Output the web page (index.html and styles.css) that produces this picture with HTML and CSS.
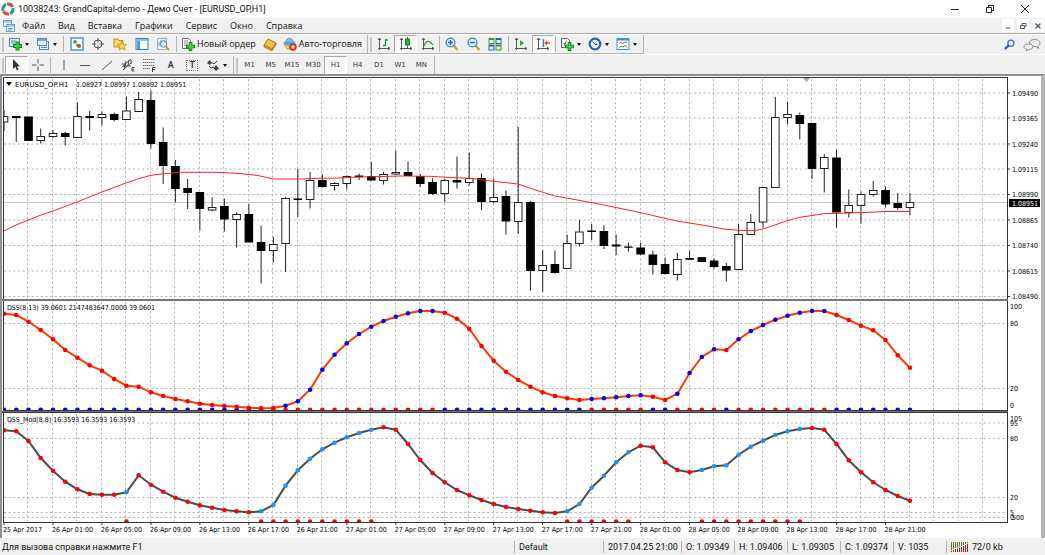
FILE: index.html
```html
<!DOCTYPE html>
<html lang="ru">
<head>
<meta charset="utf-8">
<title>10038243: GrandCapital-demo</title>
<link rel="stylesheet" href="styles.css">
</head>
<body>
<div class="window">
  <header class="titlebar">
    <svg class="logo" viewBox="0 0 14 14"><g fill="none" stroke-width="3"><path d="M2.2 9A5 5 0 0 1 5 2.400" stroke="#2f9c86"/><path d="M6 2.100A5 5 0 0 1 11.600 5" stroke="#d8453c"/><path d="M11.900 6A5 5 0 0 1 9 11.600" stroke="#2f9c86"/><path d="M8 11.900A5 5 0 0 1 2.600 9.500" stroke="#d8453c"/></g></svg>
    <h1 class="title">10038243: GrandCapital-demo - Демо Счет - [EURUSD_OP,H1]</h1>
    <div class="controls">
      <button class="ctl" aria-label="Свернуть"><svg viewBox="0 0 10 10"><path d="M1 5.500h8" stroke="#222"/></svg></button>
      <button class="ctl" aria-label="Развернуть"><svg viewBox="0 0 10 10" fill="none" stroke="#222"><path d="M1.500 3.500h5v5h-5zM3.500 3V1.500h5v5H7"/></svg></button>
      <button class="ctl" aria-label="Закрыть"><svg viewBox="0 0 10 10"><path d="M1 1l8 8M9 1l-8 8" stroke="#222"/></svg></button>
    </div>
  </header>

  <nav class="menubar">
    <svg class="menuicon" viewBox="0 0 14 14" fill="#eef6ff" stroke="#6a9fd8"><rect x="1.500" y="1.500" width="8" height="6"/><path d="M1.500 3h8"/><rect x="4.500" y="5.500" width="8" height="7"/><path d="M4.500 7h8M6 9.500h5M6 11h4"/></svg>
    <button class="menu">Файл</button>
    <button class="menu">Вид</button>
    <button class="menu">Вставка</button>
    <button class="menu">Графики</button>
    <button class="menu">Сервис</button>
    <button class="menu">Окно</button>
    <button class="menu">Справка</button>
    <div class="mdi">
      <button class="mdibtn" aria-label="Свернуть график"><svg viewBox="0 0 8 8"><path d="M2 6h4" stroke="#4a6078" stroke-width="1.300"/></svg></button>
      <button class="mdibtn" aria-label="Восстановить график"><svg viewBox="0 0 8 8" fill="none" stroke="#4a6078"><path d="M1.500 3.500h4v3h-4zM3 3V1.500h4v3H6"/></svg></button>
      <button class="mdibtn" aria-label="Закрыть график"><svg viewBox="0 0 8 8"><path d="M1.500 1.500l5 5M6.500 1.500l-5 5" stroke="#4a6078" stroke-width="1.500"/></svg></button>
    </div>
  </nav>

  <div class="toolrow">
    <div class="toolbar">
      <span class="grip"></span>
      <button class="drop" aria-label="Новый график"><svg class="ic" viewBox="0 0 14 14"><rect x="1.500" y="1.500" width="10" height="8" fill="#e4f0fb" stroke="#4d8cc0"/><path d="M3 4h5M3 6h4" stroke="#4d8cc0"/><path d="M9.500 4.500v9M5 9h9" stroke="#12831a" stroke-width="4"/><path d="M9.500 5.500v7M6 9h7" stroke="#3fd23f" stroke-width="2"/></svg><i class="caret"></i></button>
      <button class="drop" aria-label="Профили"><svg class="ic" viewBox="0 0 14 14" fill="#eaf4fd" stroke="#4d8cc0"><rect x="3.500" y="4.500" width="9" height="8"/><path d="M5 10.500h6"/><rect x="1.500" y="1.500" width="9" height="7"/><path d="M1.500 3h9" stroke-width="1.500"/></svg><i class="caret"></i></button>
      <span class="sep"></span>
      <div class="group g5">
        <button class="tool" aria-label="Обзор рынка"><svg class="ic" viewBox="0 0 14 14"><rect x="1" y="1" width="12" height="12" fill="#fff" stroke="#4a96cf" stroke-width="1.500"/><circle cx="5" cy="5" r="1.800" fill="#26a836"/><path d="M4 3l2 0 0 2zM9.500 6.500l2 3h-4z" fill="#e8452c"/><circle cx="9" cy="9" r="2" fill="#e8452c"/><circle cx="7.300" cy="8.300" r="1.300" fill="#26a836"/></svg></button>
        <button class="tool" aria-label="Окно данных"><svg class="ic" viewBox="0 0 14 14" fill="none" stroke="#555"><circle cx="7" cy="7" r="4"/><path d="M7 1v4.500M7 8.500V13M1 7h4.500M8.500 7H13"/></svg></button>
        <button class="tool" aria-label="Навигатор"><svg class="ic" viewBox="0 0 14 14"><path d="M1 2h4l1 1.500h4V10H1z" fill="#fbd76a" stroke="#bd8a1a"/><path d="M9 4.500l1.400 3 3.100.3-2.300 2.100.7 3.100L9 11.400 6.100 13l.7-3.100-2.300-2.100 3.100-.3z" fill="#ffd84a" stroke="#b9841b" stroke-width=".8"/></svg></button>
        <button class="tool" aria-label="Терминал"><svg class="ic" viewBox="0 0 14 14"><rect x="1" y="1.500" width="12" height="11" fill="#fff" stroke="#2f7fc0"/><path d="M1.500 3h11" stroke="#2f7fc0"/><rect x="2" y="4" width="3" height="8" fill="#4aa0de"/></svg></button>
        <button class="tool" aria-label="Тестер стратегий"><svg class="ic" viewBox="0 0 14 14"><path d="M1.500 1.500h9v11h-9z" fill="#f2f6fa" stroke="#9ab"/><path d="M3 9V5M5 8V3M8 4V3" stroke="#69a"/><circle cx="7.500" cy="7" r="3.200" fill="#cfe6fa" fill-opacity=".8" stroke="#4a8cc8"/><path d="M10 9.500l3 3.500" stroke="#c89a2c" stroke-width="2"/></svg></button>
      </div>
      <span class="sep"></span>
      <button class="wide"><svg class="ic" viewBox="0 0 14 14"><path d="M1.500 1.500h6l2 2v8h-8z" fill="#fff" stroke="#667"/><path d="M3 4h4M3 6h4M3 8h3" stroke="#888"/><path d="M9.500 5v9M5 9.500h9" stroke="#12831a" stroke-width="3.600"/><path d="M9.500 6v7M6 9.500h7" stroke="#3fd23f" stroke-width="1.800"/></svg>Новый ордер</button>
      <button class="tool editor" aria-label="MetaEditor"><svg class="ic" viewBox="0 0 14 14"><path d="M1 8l4-6 8 4-4 6z" fill="#f3c04a" stroke="#a9741a"/><path d="M1 8v2l8 4 4-6V6L9 12z" fill="#d99a28" stroke="#a9741a" stroke-width=".7"/></svg></button>
      <button class="wide"><svg class="ic" viewBox="0 0 14 14"><path d="M1 7c2 2 9 2 12 0l-2 5H4z" fill="#f5d257" stroke="#b48a20" stroke-width=".7"/><ellipse cx="6.500" cy="6" rx="6" ry="2.400" fill="#5ea7de"/><path d="M3 5c0-5 7-5 7 0" fill="#7dbcec" stroke="#3c84bd" stroke-width=".7"/><circle cx="10" cy="10" r="3.700" fill="#e02a1c"/><rect x="8.500" y="8.500" width="3" height="3" fill="#fff"/></svg>Авто-торговля</button>
      <span class="edge"></span>
      <span class="grip"></span>
      <div class="group g3">
        <button class="tool" aria-label="Бары"><svg class="ic" viewBox="0 0 14 14" fill="none" stroke="#555"><path d="M2.500 1v12M1 11.500h12M1 3l1.500-2L4 3M11 10l2 1.500L11 13"/><path d="M8.500 2v7M8.500 3H11M6 8.500h2.500" stroke="#26963a" stroke-width="1.300"/></svg></button>
        <button class="tool pressed" aria-label="Японские свечи"><svg class="ic" viewBox="0 0 14 14" fill="none" stroke="#555"><path d="M2.500 1v12M1 11.500h12M1 3l1.500-2L4 3M11 10l2 1.500L11 13"/><path d="M8.500 0v11" stroke="#138a1e"/><rect x="6.500" y="2" width="4" height="6" fill="#25b934" stroke="#138a1e"/></svg></button>
        <button class="tool" aria-label="Линия"><svg class="ic" viewBox="0 0 14 14" fill="none" stroke="#555"><path d="M2.500 1v12M1 11.500h12M1 3l1.500-2L4 3M11 10l2 1.500L11 13"/><path d="M3 9c2-6 5-6 9-1" stroke="#26963a" stroke-width="1.200"/></svg></button>
      </div>
      <span class="sep near"></span>
      <div class="group g3">
        <button class="tool" aria-label="Увеличить"><svg class="ic" viewBox="0 0 14 14"><path d="M8.500 8.500l4 4.500" stroke="#d3a52e" stroke-width="2.600"/><circle cx="5.500" cy="5.500" r="4.400" fill="#d9efff" stroke="#3b86c8" stroke-width="1.300"/><path d="M3 5.500h5M5.500 3v5" stroke="#2767a5" stroke-width="1.400"/></svg></button>
        <button class="tool" aria-label="Уменьшить"><svg class="ic" viewBox="0 0 14 14"><path d="M8.500 8.500l4 4.500" stroke="#d3a52e" stroke-width="2.600"/><circle cx="5.500" cy="5.500" r="4.400" fill="#d9efff" stroke="#3b86c8" stroke-width="1.300"/><path d="M3 5.500h5" stroke="#2767a5" stroke-width="1.400"/></svg></button>
        <button class="tool" aria-label="Расположить окна"><svg class="ic" viewBox="0 0 14 14"><path d="M.5 1h6v6h-6zM7.500 7.500h6v6h-6z" fill="#3e9a22"/><path d="M7.500 1h6v6h-6zM.5 7.500h6v6h-6z" fill="#2860b8"/><path d="M1.500 3h4v3h-4zM8.500 3h4v3h-4zM1.500 9.500h4v3h-4zM8.500 9.500h4v3h-4z" fill="#e9f3e4"/></svg></button>
      </div>
      <span class="sep"></span>
      <div class="group g2">
        <button class="tool" aria-label="Автопрокрутка"><svg class="ic" viewBox="0 0 14 14" fill="none" stroke="#555"><path d="M2.500 1v12M1 11.500h12M1 3l1.500-2L4 3M11 10l2 1.500L11 13"/><path d="M6 3v6l4-3z" fill="#22b030" stroke="none"/></svg></button>
        <button class="tool pressed" aria-label="Сдвиг графика"><svg class="ic" viewBox="0 0 14 14" fill="none" stroke="#555"><path d="M2.500 1v12M1 11.500h12M1 3l1.500-2L4 3M11 10l2 1.500L11 13"/><path d="M7.500 2v8" stroke="#3c76ad" stroke-width="1.400"/><path d="M9 6h5" stroke="#d2491d" stroke-width="1.400"/><path d="M8.500 6L11 3.500v5z" fill="#d2491d" stroke="none"/></svg></button>
      </div>
      <span class="sep near"></span>
      <button class="drop" aria-label="Индикаторы"><svg class="ic" viewBox="0 0 14 14"><path d="M1.500 1.500h6l2 2v7h-8z" fill="#fff" stroke="#667"/><path d="M4 9c1 0 1-5 3-5M3.500 6.500H6" stroke="#667" fill="none"/><path d="M9.500 5v9M5 9.500h9" stroke="#12831a" stroke-width="3.600"/><path d="M9.500 6v7M6 9.500h7" stroke="#3fd23f" stroke-width="1.800"/></svg><i class="caret"></i></button>
      <button class="drop" aria-label="Периоды"><svg class="ic" viewBox="0 0 14 14"><circle cx="7" cy="7" r="5.300" fill="#f4faff" stroke="#1f66b8" stroke-width="2.200"/><path d="M4.500 4.500L7 7.300h2.500" stroke="#333" fill="none"/></svg><i class="caret"></i></button>
      <button class="drop" aria-label="Шаблоны"><svg class="ic" viewBox="0 0 14 14"><rect x="1" y="1.500" width="12" height="11" fill="#fff" stroke="#4a8fc6"/><path d="M1 2.500h12" stroke="#4a8fc6" stroke-width="2"/><path d="M3 6.500l2-1 2 1 2-1.500 2 .5" stroke="#c8502e" fill="none"/><path d="M3 10.500l2-1.500 2 1 2-1.500 2 1.500" stroke="#2f9a40" fill="none"/></svg><i class="caret"></i></button>
      <span class="edge"></span>
    </div>
    <div class="right">
      <button class="tool fixed" aria-label="Поиск"><svg class="ic small" viewBox="0 0 12 12"><circle cx="7.500" cy="4.500" r="3.300" fill="#e4f0ff" stroke="#3a6fdc" stroke-width="1.500"/><path d="M5 7l-4 4" stroke="#2450c0" stroke-width="2.400"/></svg></button>
      <button class="tool fixed" aria-label="Сообщения"><svg class="ic chat" viewBox="0 0 18 14" fill="#f0f0f0" stroke="#888"><path d="M11.500 1.500c3.500 0 5.500 1.500 5.500 3.500 0 1.500-1 2.500-2 3l.5 2.500L13 8.500C9 8.800 6.500 7.500 6.500 5s2-3.500 5-3.500z"/><path d="M5.500 6c3 0 4.500 1.200 4.500 2.800S8 11.500 5.500 11.500L3.500 13v-2C2 10.500 1 10 1 8.800 1 7.200 2.500 6 5.500 6z"/></svg></button>
    </div>
  </div>

  <div class="toolrow second">
    <div class="toolbar">
      <span class="grip"></span>
      <div class="group g2">
        <button class="tool pressed" aria-label="Курсор"><svg class="ic" viewBox="0 0 14 14"><path d="M4 1v10l2.400-2.200L8 12.500l1.600-.7L8 8.300h3z" fill="#333"/></svg></button>
        <button class="tool" aria-label="Перекрестие"><svg class="ic" viewBox="0 0 14 14"><path d="M7 1v4.500M7 8.500V13M1 7h4.500M8.500 7H13" stroke="#555"/></svg></button>
      </div>
      <span class="sep"></span>
      <div class="group g7">
        <button class="tool" aria-label="Вертикальная линия"><svg class="ic" viewBox="0 0 14 14"><path d="M7 2v10" stroke="#555"/></svg></button>
        <button class="tool" aria-label="Горизонтальная линия"><svg class="ic" viewBox="0 0 14 14"><path d="M2 7.500h10" stroke="#555"/></svg></button>
        <button class="tool" aria-label="Трендовая линия"><svg class="ic" viewBox="0 0 14 14"><path d="M2 12L12 3" stroke="#555"/></svg></button>
        <button class="tool" aria-label="Канал"><svg class="ic" viewBox="0 0 14 14" fill="none" stroke="#555"><path d="M1 9l9-8M2 12l9-8M1 6h3l-1 6M5 3l-1 7M8 2l-1 6M10 2v4M2 8h8" /><path d="M13.500 9.500h-2.500v3.500h2.500M11 11.200h2"/></svg></button>
        <button class="tool" aria-label="Фибоначчи"><svg class="ic" viewBox="0 0 14 14" fill="none" stroke="#777"><path d="M1 1.500h12M1 4.500h12M1 7.500h12M1 10.500h7" stroke-dasharray="1.500 .5"/><path d="M10.500 14V9.500h3M10.500 11.500H13" stroke="#444"/></svg></button>
        <button class="tool letter">A</button>
        <button class="tool letter"><span class="boxed">T</span></button>
      </div>
      <button class="drop" aria-label="Стрелки"><svg class="ic" viewBox="0 0 14 14" fill="#444"><path d="M3.500 2L6 5 3.500 7 1 5zM10 7l3 3.500L10 13l-2.500-2.500z"/><path d="M6 4.500l2 1.500 3-3M3 8l2 2 3-1" fill="none" stroke="#444"/></svg><i class="caret"></i></button>
      <span class="edge"></span>
      <span class="grip"></span>
      <div class="group g9">
        <button class="tool tf">M1</button>
        <button class="tool tf">M5</button>
        <button class="tool tf">M15</button>
        <button class="tool tf">M30</button>
        <button class="tool tf pressed">H1</button>
        <button class="tool tf">H4</button>
        <button class="tool tf">D1</button>
        <button class="tool tf">W1</button>
        <button class="tool tf">MN</button>
      </div>
      <span class="edge"></span>
    </div>
  </div>

  <main class="charts">
    <svg class="panel" id="price" viewBox="2 76 1039 225"></svg>
    <svg class="panel" id="dss" viewBox="2 301 1039 111"></svg>
    <svg class="panel" id="mod" viewBox="2 412 1039 126"></svg>
  </main>

  <footer class="status">
    <span class="hint">Для вызова справки нажмите F1</span>
    <span class="cell profile">Default</span>
    <span class="cell date">2017.04.25 21:00</span>
    <span class="cell">O: 1.09349</span>
    <span class="cell">H: 1.09406</span>
    <span class="cell">L: 1.09305</span>
    <span class="cell">C: 1.09374</span>
    <span class="cell">V: 1035</span>
    <span class="cell traffic"><svg class="bars" viewBox="0 0 18 10"><path d="M.5 0v8M2.500 0v7M4.500 0v6M6.500 0v5.500M8.500 0v4.500M10.500 0v4M12.500 0v3M14.500 0v2M16.500 0v1" stroke="#4f7d1f"/><path d="M.5 9v1M2.500 8v2M4.500 7v3M6.500 6.500V10M8.500 5.500V10M10.500 5v5M12.500 4v6M14.500 3v7M16.500 2v8" stroke="#a01f18"/></svg>72/0 kb</span>
  </footer>
</div>
<script src="chart.js"></script>
</body>
</html>
```
FILE: styles.css
```css
* { box-sizing: border-box; }
body {
  margin: 0;
  background: #f0f0f0;
  color: #111;
  font: 9px/12px Roboto, "Open Sans", sans-serif;
}
button {
  margin: 0;
  padding: 0;
  border: 0;
  background: none;
  color: inherit;
  font: inherit;
}
.window { display: flex; flex-direction: column; min-height: 100vh; }

.titlebar {
  display: flex;
  align-items: center;
  height: 18px;
  padding-left: 1px;
  background: #fff;
}
.logo { width: 14px; height: 14px; }
.title { margin: 0 0 0 3px; font-size: 9px; font-weight: 400; white-space: nowrap; }
.controls { display: flex; margin-left: auto; padding-right: 3px; }
.ctl { display: flex; justify-content: center; width: 35px; }
.ctl svg { width: 10px; height: 10px; }

.menubar {
  display: flex;
  align-items: center;
  height: 16px;
  padding-left: 2px;
  border-bottom: 1px solid #a8a8a8;
}
.menuicon { width: 14px; height: 14px; margin-right: 6px; }
.menu { margin-right: 13px; font-family: "Open Sans", "Noto Sans", sans-serif; white-space: nowrap; }
.mdi { display: flex; gap: 3px; margin-left: auto; padding-right: 1px; }
.mdibtn {
  display: flex;
  align-items: center;
  justify-content: center;
  width: 12px;
  height: 13px;
  background: #fff;
}
.mdibtn svg { width: 8px; height: 8px; }

.toolrow { display: flex; justify-content: space-between; height: 20px; border-top: 1px solid #fff; }
.toolbar { display: flex; align-items: center; border-bottom: 1px solid #b4b4b4; }
.second .toolbar { padding-top: 1px; border-bottom: 0; }
.right { display: flex; align-items: center; gap: 3px; padding-right: 3px; }
.grip { width: 2px; height: 15px; margin: 0 1px 0 2px; background: #c4c4c4; }
.sep { width: 1px; height: 16px; margin: 0 2px; background: #b4b4b4; }
.sep.near { margin: 0 1px; }
.edge { width: 1px; height: 18px; margin-left: 2px; background: #b4b4b4; }
.group { display: flex; height: 18px; }
.g2 { width: 43px; }
.g3 { width: 65px; }
.g5 { width: 108px; }
.g7 { width: 150px; }
.g9 { width: 193px; }
.tool { display: flex; flex: 1; align-items: center; justify-content: center; }
.tool.fixed { flex: none; width: 20px; }
.tool.editor { flex: none; width: 22px; }
.pressed { background: #f8f8f8; border: 1px solid; border-color: #a8a8a8 #fff #fff #a8a8a8; }
.drop { display: flex; align-items: center; width: 28px; padding-left: 3px; gap: 3px; }
.ic { flex: none; width: 14px; height: 14px; }
.ic.small { width: 11px; height: 11px; }
.ic.chat { width: 18px; }
.caret { border: 2px solid transparent; border-top: 3px solid #111; border-bottom: 0; }
.wide {
  display: flex;
  align-items: center;
  gap: 2px;
  padding: 0 3px 0 2px;
  font-family: "Open Sans", "Noto Sans", sans-serif;
  font-weight: 500;
  white-space: nowrap;
}
.letter { color: #444; font-weight: 700; }
.boxed { padding: 0 2px; border: 1px dotted #777; line-height: 9px; }
.tf { color: #333; font: 7px/9px "DejaVu Sans", sans-serif; }

.charts {
  border: solid #8e8e8e;
  border-width: 2px 4px 0 2px;
  border-right-color: #b4b4b4;
  background: #fff;
}
.panel { display: block; width: 100%; height: auto; }
.panel text { font: 7px "DejaVu Sans Condensed", "DejaVu Sans", sans-serif; fill: #000; }
.panel .symbol { font-family: "DejaVu Sans", sans-serif; }
.panel .inverse { fill: #fff; }
.grid { stroke: #b8b8b8; stroke-dasharray: 2.300 2.300; fill: none; }
.axis { stroke: #333; fill: none; }
.divider { stroke: #777; stroke-width: 2; }
.bid { stroke: #c8c8c8; }
.average { stroke: #f22; fill: none; }
.wick { stroke: #222; }
.up { fill: #fff; stroke: #222; }
.down { fill: #000; stroke: #000; }
.dssline { stroke: #ff3a00; stroke-width: 2; fill: none; }
.modline { stroke: #4c4c4c; stroke-width: 2; fill: none; }
.red { fill: #f00; }
.blue { fill: #00f; }
.sky { fill: #1e90ff; }

.status { display: flex; align-items: center; flex: 1; min-height: 17px; white-space: nowrap; }
.hint { flex: 1; padding-left: 2px; }
.cell { width: 53px; padding-left: 4px; border-left: 1px solid #b0b0b0; }
.profile { width: 89px; }
.date { width: 78px; }
.traffic { display: flex; align-items: center; gap: 3px; width: 99px; }
.bars { width: 18px; height: 10px; }
```
FILE: chart.js
```js
const LEFT = 4, RIGHT = 1008, STEP = 12.243;
const barX = i => LEFT + STEP * i;

// high, low, body top, body bottom, falling
const candles = [
  [110,131,116.5,122,0],[116,142,116.5,117.5,1],[117,141,117,140.5,1],[128.5,143.5,136.5,140.5,0],[130,138,133.5,136.5,0],
  [131.5,145.5,133.5,136.5,1],[102.5,138,116.5,137.5,0],[111,130.5,116.5,117.5,1],[111.5,125.5,114.5,117.5,0],[112.5,121.5,114.5,119.5,1],
  [96.5,120,111,119.5,0],[92,111.5,99.5,111.5,0],[90.5,148.5,100.5,143.5,1],[127.5,184,142.5,165.5,1],[160,202.5,166.5,188.5,1],
  [179,209,188.5,192.5,1],[192,230.5,192.5,208.5,1],[197.5,211.5,207.5,210,0],[198.5,231.5,206.5,219,1],[212.5,247.5,214.5,219.5,0],
  [204,242,214.5,242,1],[225.5,283.5,242.5,250.5,1],[237,262.5,244.5,250.5,0],[197,272,198.5,243.5,0],[169,217,199,199.5,1],
  [172,208.5,180.5,199.5,0],[174,187.5,180.5,186.5,1],[182,190.5,183.5,185.5,0],[175.5,189.5,176.5,183.5,0],[173.5,180,176,176.5,1],
  [162,180.5,176.5,180,1],[172,184.5,174.5,180.5,0],[150.5,175,172.5,174,0],[161.5,176,172.5,175.5,1],[174,187,176.5,183.5,1],
  [178.5,194.5,182.5,193.5,1],[178.5,202,180.5,193.5,0],[156.5,188.5,180.5,182,1],[152.5,185.5,178.5,182.5,0],[173.5,210,178.5,201.5,1],
  [178.5,203,197.5,201.5,0],[190.5,234.5,196.5,221,1],[127,234,202.5,221.5,0],[201,290.5,202.5,270.5,1],[250,292,265.5,270.5,0],
  [250.5,273.5,264.5,272.5,1],[234.500,269,243.5,268.5,0],[220,246.5,232,243.5,0],[224,240,231,231.5,1],[225.5,249,231.5,245.5,1],
  [234.5,255,245,246,1],[242.5,251.5,247,247.2,1],[242.5,255,248,254,1],[250.5,274.5,255,264.5,1],[257.5,274.5,264.5,273.5,1],
  [253,280.5,259.5,274.5,0],[250.5,260,258.5,259.2,1],[257,262,257.7,261.5,1],[258.5,268.5,261,266.5,1],[263,281.5,266.5,270,1],
  [224,270.5,234.5,269.5,0],[214,234.5,222.5,234.5,0],[187,227.5,187.5,222,0],[97,187.5,117.5,187.5,0],[101.5,124.5,114.5,117.5,0],
  [112.5,139.5,115.5,123.5,1],[123,179,123.5,168.5,1],[154,192.5,157.5,168.5,0],[150,227.5,158,212,1],[189.500,217.5,205.5,212.5,0],
  [191.5,223.5,194.5,205.5,0],[181,196.5,190.5,194.500,0],[186.5,207.5,190.5,204,1],[193,210,203.5,207.5,1],[193,215.5,202.5,207.5,0]
];

const average = "4,231 16,225 41,215 53,211 77,202 102,192 126,183 139,178.5 151,175.3 163,173.8 180,172.3 215,172.3 240,173.5 258,175.5 273,179 300,179 320,178.3 340,178 352,177.3 400,176 430,176.3 455,177.7 470,178.3 482,180 500,182 518,184 531,188.5 543,192.3 555,196 568,198.3 592,202.7 616,207.5 640,212.5 665,218.3 677,221 700,224.7 726,229.3 740,230.3 755,230.7 764,228.7 775,225 787,220.7 800,217.3 824,213.7 860,212.7 885,211.5 910,211.5";

const dss = [313.7,315,321.7,330,339.3,350,357.7,365.3,370.7,379,385.7,386.7,392.3,396,399,401.3,403.7,405,406,406.7,407.7,408.3,408,405.7,401.3,389.7,369.7,354.7,343.3,334,326.7,321,316.7,313.3,311,311,312.7,318.7,328.7,346,360.7,371.7,380,386.7,392.3,396,398.3,400,399,398.3,397.3,396,395.3,396.7,400,393.7,373,357,349.3,350,339.3,331,325,319.7,315.7,312.7,311,311,315,320,325.7,330.3,340,355.3,367.7];
const mod = [430.3,431.3,441,458,470.7,481.7,489.3,494,494.7,494.7,492.3,475.3,484.7,491.7,497.7,501.7,505.3,507.7,510,511.3,512.3,511.3,505,485.7,470.3,458.7,449.3,442.7,437.3,433,429.7,427.3,429.7,444,460,473,482.3,490,495.3,500,504,507,509,510.7,512.3,513,511.3,504,487.7,475.7,462.3,452.3,445.7,447.3,462.3,470,472.3,470,466.3,465.3,454.7,446.7,440.7,435,431.3,429,428,429.7,444,460.3,472.3,482.3,490,496,500.7];

const within = ranges => i => ranges.some(([a, b]) => i >= a && i <= b);
const dssRising = within([[23,35],[48,52],[55,58],[60,67]]);
const modRising = within([[10,10],[21,30],[46,51],[57,65]]);

const line = (cls, x1, y1, x2, y2) => `<line class="${cls}" x1="${x1}" y1="${y1}" x2="${x2}" y2="${y2}"/>`;
const text = (x, y, s, cls = "") => `<text class="${cls}" x="${x}" y="${y}">${s}</text>`;
const dot = (cls, x, y) => `<circle class="${cls}" cx="${x}" cy="${y}" r="2.300"/>`;
const points = ys => ys.map((y, i) => `${barX(i)},${y}`).join(" ");

function grid(top, bottom, levels) {
  let s = "";
  for (let i = 2; barX(i) < RIGHT; i += 2) s += line("grid", Math.round(barX(i)) - .5, top, Math.round(barX(i)) - .5, bottom);
  for (const y of levels) s += line("grid", LEFT, y, RIGHT, y);
  return s;
}
const frame = (top, bottom) => `<path class="axis" d="M3.500 ${bottom}V${top}M1007.500 ${top}V${bottom}"/>`;

const prices = ["1.09490","1.09365","1.09240","1.09115","1.08990","1.08865","1.08740","1.08615","1.08490"];
const priceY = [93,118,144,169,194.500,220,245.500,271,296.500];

let s = grid(79, 299, priceY) + line("bid", LEFT, 202.5, RIGHT, 202.5);
s += '<clipPath id="plot"><path d="M4 77H1007V522H4z"/></clipPath><g clip-path="url(#plot)">';
candles.forEach(([high, low, top, bottom, falling], i) => {
  const x = barX(i);
  s += line("wick", x, high, x, low) + `<rect class="${falling ? "down" : "up"}" x="${x - 3.8}" y="${top}" width="7.600" height="${bottom - top}"/>`;
});
s += `<polyline class="average" points="${average}"/></g>`;
s += '<path d="M803 78h7l-3.500 4z" fill="#aaa"/><path d="M6 82h6l-3 4z"/>';
s += frame(77, 299) + line("axis", 3, 77.5, 1008, 77.5) + line("divider", 2, 300, 1008, 300);
s += text(15, 87, "EURUSD_OP.H1", "symbol") + text(76, 87, "1.08927 1.08997 1.08892 1.08951");
prices.forEach((p, i) => { s += line("axis", 1007, priceY[i], 1010, priceY[i]) + text(1012, priceY[i] + 2.5, p); });
s += '<rect x="1009" y="199" width="31" height="8"/>' + text(1012, 205.5, "1.08951", "inverse");
document.getElementById("price").innerHTML = s;

s = grid(302, 410, [323.5, 388.5]) + `<g clip-path="url(#plot)"><polyline class="dssline" points="${points(dss)}"/>`;
dss.forEach((y, i) => {
  s += dot(dssRising(i) ? "red" : "blue", barX(i), 409.7) + dot(dssRising(i) ? "blue" : "red", barX(i), y);
});
s += '</g>' + frame(301, 411) + line("axis", 3, 410.5, 1008, 410.5) + line("divider", 2, 412, 1008, 412);
s += text(7, 310, "DSS(8,13) 39.0601 2147483647.0000 39.0601");
s += text(1010, 309, "100") + text(1010, 326, "80") + text(1010, 391, "20") + text(1010, 408, "0");
document.getElementById("dss").innerHTML = s;

s = grid(414, 521, [423, 438.5, 497.5, 512.5, 517.5]) + `<g clip-path="url(#plot)"><polyline class="modline" points="${points(mod)}"/>`;
mod.forEach((y, i) => {
  if (modRising(i)) s += dot("red", barX(i), 521.5);
  s += dot(modRising(i) ? "sky" : "red", barX(i), y);
});
s += '</g>' + frame(412, 522) + line("axis", 3, 522.5, 1008, 522.5) + line("axis", 2, 412.5, 1008, 412.5);
s += text(7, 422, "DSS_Mod(8,8) 16.3593 16.3593 16.3593");
s += text(1010, 421, "105") + text(1010, 426, "95") + text(1010, 441, "80") + text(1010, 500, "20") + text(1010, 515, "5") + text(1010, 520, "0") + text(1012, 520, "500");
const times = ["25 Apr 2017"];
for (const [day, hours] of [[26, "01 05 09 13 17 21"], [27, "01 05 09 13 17 21"], [28, "01 05 09 13 17 21"]])
  for (const h of hours.split(" ")) times.push(`${day} Apr ${h}:00`);
times.forEach((t, k) => {
  const x = barX(k * 4);
  s += line("axis", x, 522, x, 525) + text(x - 1, 532, t);
});
document.getElementById("mod").innerHTML = s;
```
